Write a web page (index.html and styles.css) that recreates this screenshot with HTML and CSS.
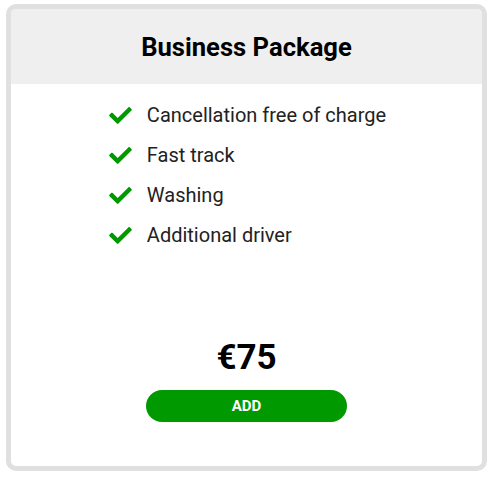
FILE: index.html
```html
<!DOCTYPE html>
<html>
<head>
<meta charset="utf-8">
<link rel="stylesheet" href="styles.css">
</head>
<body>
<div class="card">
  <div class="card-header">
    <h2 class="title">Business Package</h2>
  </div>
  <div class="card-body">
    <ul class="features">
      <li class="feature"><svg class="check" viewBox="0 64 512 384"><path d="M173.898 439.404l-166.4-166.4c-9.997-9.997-9.997-26.206 0-36.204l36.203-36.204c9.997-9.998 26.207-9.998 36.204 0L192 312.69 432.095 72.596c9.997-9.997 26.207-9.997 36.204 0l36.203 36.204c9.997 9.997 9.997 26.206 0 36.204l-294.4 294.401c-9.998 9.997-26.207 9.997-36.204-.001z"/></svg><span>Cancellation free of charge</span></li>
      <li class="feature"><svg class="check" viewBox="0 64 512 384"><path d="M173.898 439.404l-166.4-166.4c-9.997-9.997-9.997-26.206 0-36.204l36.203-36.204c9.997-9.998 26.207-9.998 36.204 0L192 312.69 432.095 72.596c9.997-9.997 26.207-9.997 36.204 0l36.203 36.204c9.997 9.997 9.997 26.206 0 36.204l-294.4 294.401c-9.998 9.997-26.207 9.997-36.204-.001z"/></svg><span>Fast track</span></li>
      <li class="feature"><svg class="check" viewBox="0 64 512 384"><path d="M173.898 439.404l-166.4-166.4c-9.997-9.997-9.997-26.206 0-36.204l36.203-36.204c9.997-9.998 26.207-9.998 36.204 0L192 312.69 432.095 72.596c9.997-9.997 26.207-9.997 36.204 0l36.203 36.204c9.997 9.997 9.997 26.206 0 36.204l-294.4 294.401c-9.998 9.997-26.207 9.997-36.204-.001z"/></svg><span>Washing</span></li>
      <li class="feature"><svg class="check" viewBox="0 64 512 384"><path d="M173.898 439.404l-166.4-166.4c-9.997-9.997-9.997-26.206 0-36.204l36.203-36.204c9.997-9.998 26.207-9.998 36.204 0L192 312.69 432.095 72.596c9.997-9.997 26.207-9.997 36.204 0l36.203 36.204c9.997 9.997 9.997 26.206 0 36.204l-294.4 294.401c-9.998 9.997-26.207 9.997-36.204-.001z"/></svg><span>Additional driver</span></li>
    </ul>
    <div class="footer">
      <div class="price">€75</div>
      <button class="add-btn">ADD</button>
    </div>
  </div>
</div>
</body>
</html>
```

FILE: styles.css
```css
* { box-sizing: border-box; }
html, body { margin: 0; padding: 0; background: #fff; }
body {
  padding: 4px 5px 6px 6px;
  font-family: Roboto, "Liberation Sans", sans-serif;
}
.card {
  width: 481px;
  height: 467px;
  border: 5px solid #e0e0e0;
  border-radius: 10px;
  overflow: hidden;
  display: flex;
  flex-direction: column;
}
.card-header {
  background: #efefef;
  height: 75px;
  display: flex;
  align-items: center;
  justify-content: center;
}
.title {
  margin: 0;
  font-size: 25.6px;
  font-weight: 700;
  color: #000;
}
.card-body {
  flex: 1;
  display: flex;
  flex-direction: column;
  align-items: center;
  padding: 11px 0 44px;
}
.features {
  list-style: none;
  margin: 0;
  padding: 0 0 0 2px;
}
.feature {
  height: 40px;
  display: flex;
  align-items: center;
  font-size: 20px;
  color: #222;
}
.check {
  width: 23px;
  height: 17px;
  fill: #009900;
  margin-right: 15px;
}
.footer {
  margin-top: auto;
  display: flex;
  flex-direction: column;
  align-items: center;
}
.price {
  font-size: 35px;
  font-weight: 700;
  color: #000;
  line-height: 42px;
  margin-bottom: 11px;
}
.add-btn {
  width: 201px;
  height: 32px;
  border: none;
  border-radius: 16px;
  background: #009900;
  color: #fff;
  font-family: Roboto, "Liberation Sans", sans-serif;
  font-weight: 700;
  font-size: 15px;
  padding: 0;
}
```
